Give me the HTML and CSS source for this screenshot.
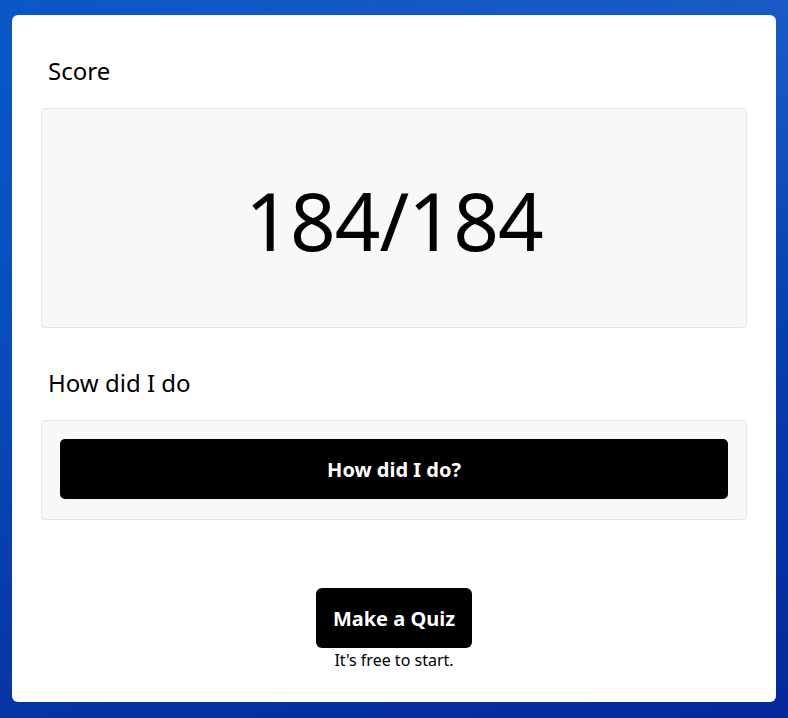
FILE: index.html
```html
<!DOCTYPE html>
<html lang="en">
<head>
<meta charset="utf-8">
<title>Score</title>
<link rel="stylesheet" href="styles.css">
</head>
<body>
<main class="card">
  <section class="section">
    <h2 class="section-title">Score</h2>
    <div class="panel panel-score">
      <div class="score">184/184</div>
    </div>
  </section>
  <section class="section section-second">
    <h2 class="section-title">How did I do</h2>
    <div class="panel panel-action">
      <button class="btn btn-wide">How did I do?</button>
    </div>
  </section>
  <div class="cta">
    <button class="btn btn-cta">Make a Quiz</button>
    <p class="cta-note">It's free to start.</p>
  </div>
</main>
</body>
</html>
```

FILE: styles.css
```css
html, body {
  height: 100%;
}
body {
  margin: 0;
  padding: 15px 12px 16px;
  box-sizing: border-box;
  font-family: "Noto Sans", "Open Sans", sans-serif;
  color: #000;
  background:
    linear-gradient(200deg, rgba(255,255,255,0.06) 0%, rgba(255,255,255,0) 30%),
    linear-gradient(165deg, #0b57c6 0%, #0a4dbd 35%, #0738a8 70%, #05289a 100%);
}
.card {
  background: #fff;
  border-radius: 6px;
  height: 100%;
  box-sizing: border-box;
  padding: 41px 29px 30px;
  display: flex;
  flex-direction: column;
}
.section-title {
  margin: 0 0 22px;
  padding: 0 7px;
  font-size: 24px;
  line-height: 30px;
  font-weight: 400;
}
.section-second {
  margin-top: 40px;
}
.panel {
  background: #f8f8f8;
  border: 1px solid #e6e6e6;
  border-radius: 4px;
}
.panel-score {
  height: 218px;
  display: flex;
  align-items: center;
  justify-content: center;
}
.score {
  font-size: 80px;
  line-height: 1;
  letter-spacing: -1px;
  margin-top: 4px;
}
.panel-action {
  padding: 18px 18px 20px;
}
.btn {
  display: block;
  border: 0;
  background: #000;
  color: #fff;
  font-family: inherit;
  font-weight: 700;
  cursor: pointer;
}
.btn-wide {
  width: 100%;
  height: 60px;
  border-radius: 5px;
  font-size: 20px;
}
.cta {
  margin-top: 68px;
  display: flex;
  flex-direction: column;
  align-items: center;
}
.btn-cta {
  width: 156px;
  height: 60px;
  border-radius: 6px;
  font-size: 20px;
}
.cta-note {
  margin: 1px 0 0;
  font-size: 16px;
  line-height: 22px;
}
```
